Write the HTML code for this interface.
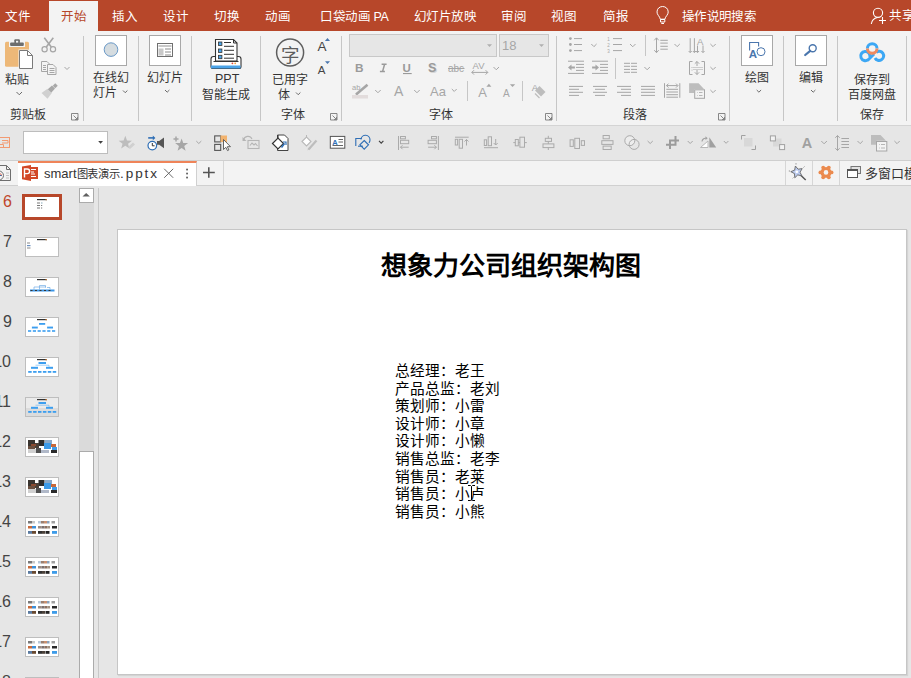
<!DOCTYPE html>
<html lang="zh-CN">
<head>
<meta charset="utf-8">
<style>
*{margin:0;padding:0;box-sizing:border-box}
html,body{width:911px;height:678px;overflow:hidden;background:#E6E6E6;font-family:"Liberation Sans",sans-serif;position:relative}
.a{position:absolute}
.t{position:absolute;white-space:nowrap;font-size:12px;line-height:12px;color:#333}
.tab{color:#fff;font-size:12.5px;line-height:13px}
.sep{position:absolute;width:1px;background:#C6C6C6}
.box{position:absolute;border:1px solid #A8A8A8;background:#fff}
svg{position:absolute;overflow:visible}
.th{background:#fff;border:1px solid #BEBEBE}
</style>
</head>
<body>
<!-- tab bar -->
<div class="a" style="left:0;top:0;width:911px;height:31px;background:#B7472A"></div>
<div class="a" style="left:49px;top:1px;width:49px;height:30px;background:#F3F3F3"></div>
<div class="t tab" style="left:5px;top:11px">文件</div>
<div class="t tab" style="left:61px;top:11px;color:#B7472A">开始</div>
<div class="t tab" style="left:112px;top:11px">插入</div>
<div class="t tab" style="left:163px;top:11px">设计</div>
<div class="t tab" style="left:214px;top:11px">切换</div>
<div class="t tab" style="left:265px;top:11px">动画</div>
<div class="t tab" style="left:320px;top:11px;letter-spacing:-0.4px">口袋动画 PA</div>
<div class="t tab" style="left:414px;top:11px;letter-spacing:-0.6px">幻灯片放映</div>
<div class="t tab" style="left:501px;top:11px">审阅</div>
<div class="t tab" style="left:551px;top:11px">视图</div>
<div class="t tab" style="left:603px;top:11px">简报</div>
<div class="t tab" style="left:682px;top:11px;letter-spacing:-0.7px">操作说明搜索</div>
<div class="t tab" style="left:889px;top:10px">共享</div>

<!-- ribbon -->
<div class="a" style="left:0;top:31px;width:911px;height:94px;background:#F3F3F3"></div>
<div class="a" style="left:0;top:125px;width:911px;height:1px;background:#D4D4D4"></div>

<!-- separators -->
<div class="sep" style="left:83px;top:36px;height:85px"></div>
<div class="sep" style="left:138px;top:36px;height:85px"></div>
<div class="sep" style="left:191px;top:36px;height:85px"></div>
<div class="sep" style="left:260px;top:36px;height:85px"></div>
<div class="sep" style="left:341px;top:36px;height:85px"></div>
<div class="sep" style="left:556px;top:36px;height:85px"></div>
<div class="sep" style="left:729px;top:36px;height:85px"></div>
<div class="sep" style="left:783px;top:36px;height:85px"></div>
<div class="sep" style="left:837px;top:36px;height:85px"></div>
<div class="sep" style="left:906px;top:36px;height:85px"></div>

<!-- ribbon labels -->
<div class="t" style="left:5px;top:74px">粘贴</div>
<div class="t" style="left:10px;top:109px">剪贴板</div>
<div class="t" style="left:93px;top:72px">在线幻</div>
<div class="t" style="left:93px;top:87px">灯片</div>
<div class="t" style="left:147px;top:72px">幻灯片</div>
<div class="t" style="left:215px;top:73px;font-size:12.5px">PPT</div>
<div class="t" style="left:202px;top:89px">智能生成</div>
<div class="t" style="left:272px;top:74px">已用字</div>
<div class="t" style="left:278px;top:89px">体</div>
<div class="t" style="left:281px;top:109px">字体</div>
<div class="t" style="left:429px;top:109px">字体</div>
<div class="t" style="left:623px;top:109px">段落</div>
<div class="t" style="left:745px;top:72px">绘图</div>
<div class="t" style="left:799px;top:72px">编辑</div>
<div class="t" style="left:854px;top:74px">保存到</div>
<div class="t" style="left:848px;top:89px">百度网盘</div>
<div class="t" style="left:860px;top:109px">保存</div>

<!-- big button boxes -->
<div class="box" style="left:95px;top:35px;width:32px;height:31px"></div>
<div class="box" style="left:149px;top:35px;width:32px;height:31px"></div>
<div class="box" style="left:741px;top:35px;width:32px;height:31px"></div>
<div class="box" style="left:795px;top:35px;width:32px;height:31px"></div>

<!-- font boxes -->
<div class="a" style="left:349px;top:34px;width:148px;height:23px;background:#E6E6E6;border:1px solid #C8C8C8"></div>
<div class="a" style="left:499px;top:34px;width:50px;height:23px;background:#E6E6E6;border:1px solid #C8C8C8"></div>
<div class="t" style="left:502px;top:39px;color:#A6A6A6;font-size:13px;line-height:13px">18</div>

<!-- QAT toolbar -->
<div class="a" style="left:0;top:126px;width:911px;height:34px;background:#E6E6E6"></div>
<div class="a" style="left:0;top:160px;width:911px;height:1px;background:#CFCFCF"></div>
<div class="a" style="left:23px;top:131px;width:85px;height:23px;background:#fff;border:1px solid #BDBDBD"></div>

<!-- doc tabs row -->
<div class="a" style="left:0;top:161px;width:911px;height:25px;background:#F3F3F3"></div>
<div class="a" style="left:0;top:185px;width:911px;height:1px;background:#D0D0D0"></div>
<div class="a" style="left:18px;top:161px;width:179px;height:25px;background:#fff;border-top:2px solid #EF8459;border-right:1px solid #D0D0D0"></div>
<div class="t" style="left:44px;top:167px;font-size:13px;line-height:14px;color:#333">smart<span style="font-size:11.3px;letter-spacing:-0.1px">图表演示</span><span style="letter-spacing:1.9px;font-size:13.5px">.pptx</span></div>
<div class="sep" style="left:223px;top:161px;height:24px;background:#D6D6D6"></div>
<div class="sep" style="left:785px;top:161px;height:24px;background:#D6D6D6"></div>
<div class="sep" style="left:812px;top:161px;height:24px;background:#D6D6D6"></div>
<div class="sep" style="left:839px;top:161px;height:24px;background:#D6D6D6"></div>
<div class="t" style="left:865px;top:167px;font-size:13px;line-height:13px;color:#333">多窗口模</div>

<!-- left panel -->
<div class="a" style="left:79px;top:188px;width:15px;height:490px;background:#DADADA"></div>
<div class="a" style="left:79px;top:188px;width:15px;height:15px;background:#fff;border:1px solid #ABABAB"></div>
<div class="a" style="left:79px;top:451px;width:15px;height:240px;background:#fff;border:1px solid #ABABAB"></div>
<div class="a" style="left:98px;top:188px;width:1px;height:490px;background:#C8C8C8"></div>

<!-- slide numbers & thumbs -->
<div class="t" style="right:899px;top:194px;font-size:16px;line-height:16px;color:#C0462A;text-align:right;width:40px;left:auto">6</div>
<div class="t" style="right:899px;top:234px;font-size:16px;line-height:16px;color:#444;text-align:right;width:40px;left:auto">7</div>
<div class="t" style="right:899px;top:274px;font-size:16px;line-height:16px;color:#444;text-align:right;width:40px;left:auto">8</div>
<div class="t" style="right:899px;top:314px;font-size:16px;line-height:16px;color:#444;text-align:right;width:40px;left:auto">9</div>
<div class="t" style="right:900px;top:354px;font-size:16px;line-height:16px;color:#444;text-align:right;width:40px;left:auto">10</div>
<div class="t" style="right:900px;top:394px;font-size:16px;line-height:16px;color:#444;text-align:right;width:40px;left:auto">11</div>
<div class="t" style="right:900px;top:434px;font-size:16px;line-height:16px;color:#444;text-align:right;width:40px;left:auto">12</div>
<div class="t" style="right:900px;top:474px;font-size:16px;line-height:16px;color:#444;text-align:right;width:40px;left:auto">13</div>
<div class="t" style="right:900px;top:514px;font-size:16px;line-height:16px;color:#444;text-align:right;width:40px;left:auto">14</div>
<div class="t" style="right:900px;top:554px;font-size:16px;line-height:16px;color:#444;text-align:right;width:40px;left:auto">15</div>
<div class="t" style="right:900px;top:594px;font-size:16px;line-height:16px;color:#444;text-align:right;width:40px;left:auto">16</div>
<div class="t" style="right:900px;top:634px;font-size:16px;line-height:16px;color:#444;text-align:right;width:40px;left:auto">17</div>
<div class="t" style="right:900px;top:674px;font-size:16px;line-height:16px;color:#444;text-align:right;width:40px;left:auto">18</div>
<div class="a th" style="left:25px;top:237px;width:34px;height:20px"></div>
<div class="a th" style="left:25px;top:277px;width:34px;height:20px"></div>
<div class="a th" style="left:25px;top:317px;width:34px;height:20px"></div>
<div class="a th" style="left:25px;top:357px;width:34px;height:20px"></div>
<div class="a th" style="left:25px;top:397px;width:34px;height:20px"></div>
<div class="a th" style="left:25px;top:437px;width:34px;height:20px"></div>
<div class="a th" style="left:25px;top:477px;width:34px;height:20px"></div>
<div class="a th" style="left:25px;top:517px;width:34px;height:20px"></div>
<div class="a th" style="left:25px;top:557px;width:34px;height:20px"></div>
<div class="a th" style="left:25px;top:597px;width:34px;height:20px"></div>
<div class="a th" style="left:25px;top:637px;width:34px;height:20px"></div>
<div class="a th" style="left:25px;top:677px;width:34px;height:20px"></div>
<div class="a" style="left:22px;top:194px;width:40px;height:26px;border:3px solid #B7472A;background:#fff"></div>
<svg width="911" height="678" style="left:0;top:0" viewBox="0 0 911 678">
<rect x="37" y="199" width="10" height="1.2" fill="#333"/><rect x="45.5" y="199" width="1.5" height="1.2" fill="#C07A3A"/>
<g fill="#777"><rect x="37" y="202.5" width="3" height="1"/><rect x="37" y="205" width="3" height="1"/><rect x="37" y="207.5" width="3" height="1"/><rect x="41" y="205" width="1.2" height="1"/><rect x="41" y="207.5" width="1.2" height="1"/><rect x="41" y="202.5" width="1.5" height="1" fill="#8AB"/></g>
<rect x="37" y="239" width="10" height="1.2" fill="#333"/><rect x="45.5" y="239" width="1.5" height="1.2" fill="#C07A3A"/>
<g fill="#888"><rect x="27" y="242.5" width="3" height="1"/><rect x="27" y="245" width="3.5" height="1.2" fill="#6A8FC0"/><rect x="27" y="247.5" width="3.5" height="1"/></g>
<rect x="37" y="279" width="10" height="1.2" fill="#333"/><rect x="45.5" y="279" width="1.5" height="1.2" fill="#C07A3A"/>
<g fill="none" stroke="#5AA0E0" stroke-width="0.6"><path d="M39.5 285.5h6v2M39.5 285.5v4M34 287h12M34 287v2.5M47 287.5h3v2"/></g>
<rect x="30" y="289.5" width="24.5" height="2" fill="#3C95E6"/><g fill="#333"><rect x="30.5" y="290" width="2" height="1"/><rect x="35" y="290" width="2" height="1"/><rect x="39.5" y="290" width="2" height="1"/><rect x="44" y="290" width="2" height="1"/><rect x="48.5" y="290" width="2" height="1"/></g>
<rect x="37" y="319" width="10" height="1.2" fill="#333"/><rect x="45.5" y="319" width="1.5" height="1.2" fill="#C07A3A"/>
<rect x="39" y="323" width="6.2" height="1.8" fill="#3C9EEF"/>
<rect x="31.9" y="326.6" width="5.9" height="1.9" fill="#3C9EEF"/><rect x="47.1" y="326.6" width="5.9" height="1.9" fill="#3C9EEF"/>
<rect x="28.0" y="330.2" width="3.2" height="1.6" fill="#3C9EEF"/>
<rect x="32.8" y="330.2" width="3.2" height="1.6" fill="#3C9EEF"/>
<rect x="37.6" y="330.2" width="3.2" height="1.6" fill="#3C9EEF"/>
<rect x="42.4" y="330.2" width="3.2" height="1.6" fill="#3C9EEF"/>
<rect x="47.2" y="330.2" width="3.2" height="1.6" fill="#3C9EEF"/>
<rect x="52.0" y="330.2" width="3.2" height="1.6" fill="#3C9EEF"/>
<rect x="37" y="359" width="10" height="1.2" fill="#333"/><rect x="45.5" y="359" width="1.5" height="1.2" fill="#C07A3A"/>
<rect x="38.5" y="362" width="7.5" height="2" fill="#3C9EEF"/>
<path d="M35.5 365.2h13.5v1.5" stroke="#3C9EEF" stroke-width="0.5" fill="none"/>
<rect x="31" y="366.8" width="7" height="2" fill="#3C9EEF"/><rect x="46" y="366.8" width="7" height="2" fill="#3C9EEF"/>
<rect x="28.2" y="371" width="3.5" height="1.8" fill="#3C9EEF"/>
<rect x="33.1" y="371" width="3.5" height="1.8" fill="#3C9EEF"/>
<rect x="38.0" y="371" width="3.5" height="1.8" fill="#3C9EEF"/>
<rect x="42.9" y="371" width="3.5" height="1.8" fill="#3C9EEF"/>
<rect x="47.8" y="371" width="3.5" height="1.8" fill="#3C9EEF"/>
<rect x="52.7" y="371" width="3.5" height="1.8" fill="#3C9EEF"/>
<rect x="26" y="398" width="32" height="18" fill="#EBEBEB"/><rect x="26" y="408" width="32" height="8" fill="#DCDCDC"/>
<rect x="37" y="399" width="10" height="1.2" fill="#333"/><rect x="45.5" y="399" width="1.5" height="1.2" fill="#C07A3A"/>
<rect x="38.5" y="402" width="7.5" height="2" fill="#3C9EEF"/>
<path d="M35.5 405.2h13.5v1.5" stroke="#3C9EEF" stroke-width="0.5" fill="none"/>
<rect x="31" y="406.8" width="7" height="2" fill="#3C9EEF"/><rect x="46" y="406.8" width="7" height="2" fill="#3C9EEF"/>
<rect x="28.2" y="411" width="3.5" height="1.8" fill="#3C9EEF"/>
<rect x="33.1" y="411" width="3.5" height="1.8" fill="#3C9EEF"/>
<rect x="38.0" y="411" width="3.5" height="1.8" fill="#3C9EEF"/>
<rect x="42.9" y="411" width="3.5" height="1.8" fill="#3C9EEF"/>
<rect x="47.8" y="411" width="3.5" height="1.8" fill="#3C9EEF"/>
<rect x="52.7" y="411" width="3.5" height="1.8" fill="#3C9EEF"/>
<rect x="28" y="440" width="7" height="6" fill="#3A3530"/>
<rect x="28" y="446" width="7" height="5" fill="#6A5040"/>
<rect x="38.5" y="440" width="6" height="6" fill="#2F2F2F"/>
<rect x="35" y="443" width="4" height="5" fill="#4A4038"/>
<rect x="45" y="440" width="7" height="4" fill="#8AA9C8"/>
<rect x="44" y="443" width="7" height="6" fill="#3D9BE8"/>
<rect x="51" y="444" width="5" height="3" fill="#C8693A"/>
<rect x="28" y="449" width="8" height="4" fill="#D0D0D0"/>
<rect x="36" y="448" width="5" height="5" fill="#505050"/>
<rect x="41" y="450" width="8" height="3" fill="#B0B8C8"/>
<rect x="52" y="447" width="5" height="4" fill="#3F9AE6"/>
<rect x="51" y="450" width="6" height="3" fill="#2A2A2A"/>
<rect x="31" y="444" width="5" height="2" fill="#8A4A30"/>
<rect x="28" y="480" width="7" height="6" fill="#3A3530"/>
<rect x="28" y="486" width="7" height="5" fill="#6A5040"/>
<rect x="38.5" y="480" width="6" height="6" fill="#2F2F2F"/>
<rect x="35" y="483" width="4" height="5" fill="#4A4038"/>
<rect x="45" y="480" width="7" height="4" fill="#8AA9C8"/>
<rect x="44" y="483" width="7" height="6" fill="#3D9BE8"/>
<rect x="51" y="484" width="5" height="3" fill="#C8693A"/>
<rect x="28" y="489" width="8" height="4" fill="#D0D0D0"/>
<rect x="36" y="488" width="5" height="5" fill="#505050"/>
<rect x="41" y="490" width="8" height="3" fill="#B0B8C8"/>
<rect x="52" y="487" width="5" height="4" fill="#3F9AE6"/>
<rect x="51" y="490" width="6" height="3" fill="#2A2A2A"/>
<rect x="31" y="484" width="5" height="2" fill="#8A4A30"/>
<rect x="28" y="521" width="4" height="2.5" fill="#7A7A7A"/>
<rect x="32" y="521" width="3" height="2.5" fill="#C8C8C8"/>
<rect x="38" y="521" width="3" height="2.5" fill="#B8C8D8"/>
<rect x="41" y="521" width="3" height="2.5" fill="#9A8070"/>
<rect x="44" y="521" width="3" height="2.5" fill="#C89070"/>
<rect x="47" y="521" width="2.5" height="2.5" fill="#8AA0B8"/>
<rect x="51.5" y="521" width="3.5" height="2.5" fill="#A0A0A0"/>
<rect x="28" y="526" width="4" height="2.5" fill="#C8693A"/>
<rect x="32" y="526" width="4" height="2.5" fill="#3D8FD8"/>
<rect x="38" y="526" width="3.5" height="2.5" fill="#9A8A80"/>
<rect x="41.5" y="526" width="3" height="2.5" fill="#7A7070"/>
<rect x="44.5" y="526" width="3" height="2.5" fill="#8A7060"/>
<rect x="47.5" y="526" width="2.5" height="2.5" fill="#A09080"/>
<rect x="52" y="526" width="5" height="2.5" fill="#2A2A2A"/>
<rect x="28" y="531" width="4" height="2.8" fill="#5A7AA0"/>
<rect x="32" y="531" width="4" height="2.8" fill="#6A4A30"/>
<rect x="38" y="531" width="4" height="2.8" fill="#303030"/>
<rect x="42" y="531" width="3" height="2.8" fill="#4A4038"/>
<rect x="45.5" y="531" width="4" height="2.8" fill="#222"/>
<rect x="52" y="531" width="5" height="2.8" fill="#3D9BE8"/>
<rect x="28" y="561" width="4" height="2.5" fill="#7A7A7A"/>
<rect x="32" y="561" width="3" height="2.5" fill="#C8C8C8"/>
<rect x="38" y="561" width="3" height="2.5" fill="#B8C8D8"/>
<rect x="41" y="561" width="3" height="2.5" fill="#9A8070"/>
<rect x="44" y="561" width="3" height="2.5" fill="#C89070"/>
<rect x="47" y="561" width="2.5" height="2.5" fill="#8AA0B8"/>
<rect x="51.5" y="561" width="3.5" height="2.5" fill="#A0A0A0"/>
<rect x="28" y="566" width="4" height="2.5" fill="#C8693A"/>
<rect x="32" y="566" width="4" height="2.5" fill="#3D8FD8"/>
<rect x="38" y="566" width="3.5" height="2.5" fill="#9A8A80"/>
<rect x="41.5" y="566" width="3" height="2.5" fill="#7A7070"/>
<rect x="44.5" y="566" width="3" height="2.5" fill="#8A7060"/>
<rect x="47.5" y="566" width="2.5" height="2.5" fill="#A09080"/>
<rect x="52" y="566" width="5" height="2.5" fill="#2A2A2A"/>
<rect x="28" y="571" width="4" height="2.8" fill="#5A7AA0"/>
<rect x="32" y="571" width="4" height="2.8" fill="#6A4A30"/>
<rect x="38" y="571" width="4" height="2.8" fill="#303030"/>
<rect x="42" y="571" width="3" height="2.8" fill="#4A4038"/>
<rect x="45.5" y="571" width="4" height="2.8" fill="#222"/>
<rect x="52" y="571" width="5" height="2.8" fill="#3D9BE8"/>
<rect x="28" y="601" width="4" height="2.5" fill="#7A7A7A"/>
<rect x="32" y="601" width="3" height="2.5" fill="#C8C8C8"/>
<rect x="38" y="601" width="3" height="2.5" fill="#B8C8D8"/>
<rect x="41" y="601" width="3" height="2.5" fill="#9A8070"/>
<rect x="44" y="601" width="3" height="2.5" fill="#C89070"/>
<rect x="47" y="601" width="2.5" height="2.5" fill="#8AA0B8"/>
<rect x="51.5" y="601" width="3.5" height="2.5" fill="#A0A0A0"/>
<rect x="28" y="606" width="4" height="2.5" fill="#C8693A"/>
<rect x="32" y="606" width="4" height="2.5" fill="#3D8FD8"/>
<rect x="38" y="606" width="3.5" height="2.5" fill="#9A8A80"/>
<rect x="41.5" y="606" width="3" height="2.5" fill="#7A7070"/>
<rect x="44.5" y="606" width="3" height="2.5" fill="#8A7060"/>
<rect x="47.5" y="606" width="2.5" height="2.5" fill="#A09080"/>
<rect x="52" y="606" width="5" height="2.5" fill="#2A2A2A"/>
<rect x="28" y="611" width="4" height="2.8" fill="#5A7AA0"/>
<rect x="32" y="611" width="4" height="2.8" fill="#6A4A30"/>
<rect x="38" y="611" width="4" height="2.8" fill="#303030"/>
<rect x="42" y="611" width="3" height="2.8" fill="#4A4038"/>
<rect x="45.5" y="611" width="4" height="2.8" fill="#222"/>
<rect x="52" y="611" width="5" height="2.8" fill="#3D9BE8"/>
<rect x="28" y="641" width="4" height="2.5" fill="#7A7A7A"/>
<rect x="32" y="641" width="3" height="2.5" fill="#C8C8C8"/>
<rect x="38" y="641" width="3" height="2.5" fill="#B8C8D8"/>
<rect x="41" y="641" width="3" height="2.5" fill="#9A8070"/>
<rect x="44" y="641" width="3" height="2.5" fill="#C89070"/>
<rect x="47" y="641" width="2.5" height="2.5" fill="#8AA0B8"/>
<rect x="51.5" y="641" width="3.5" height="2.5" fill="#A0A0A0"/>
<rect x="28" y="646" width="4" height="2.5" fill="#C8693A"/>
<rect x="32" y="646" width="4" height="2.5" fill="#3D8FD8"/>
<rect x="38" y="646" width="3.5" height="2.5" fill="#9A8A80"/>
<rect x="41.5" y="646" width="3" height="2.5" fill="#7A7070"/>
<rect x="44.5" y="646" width="3" height="2.5" fill="#8A7060"/>
<rect x="47.5" y="646" width="2.5" height="2.5" fill="#A09080"/>
<rect x="52" y="646" width="5" height="2.5" fill="#2A2A2A"/>
<rect x="28" y="651" width="4" height="2.8" fill="#5A7AA0"/>
<rect x="32" y="651" width="4" height="2.8" fill="#6A4A30"/>
<rect x="38" y="651" width="4" height="2.8" fill="#303030"/>
<rect x="42" y="651" width="3" height="2.8" fill="#4A4038"/>
<rect x="45.5" y="651" width="4" height="2.8" fill="#222"/>
<rect x="52" y="651" width="5" height="2.8" fill="#3D9BE8"/>
</svg>
<!-- slide -->
<div class="a" style="left:117px;top:229px;width:790px;height:446px;background:#fff;border:1px solid #C6C6C6;box-shadow:1px 1px 1px rgba(0,0,0,0.08)"></div>
<div class="t" style="left:381px;top:253px;font-size:26px;line-height:26px;font-weight:bold;color:#000">想象力公司组织架构图</div>
<div class="t" style="left:395px;top:363px;font-size:14.67px;line-height:17.6px;color:#000;white-space:pre">总经理：老王
产品总监：老刘
策划师：小雷
设计师：小章
设计师：小懒
销售总监：老李
销售员：老莱
销售员：小卢
销售员：小熊</div>


<svg width="911" height="678" style="left:0;top:0" viewBox="0 0 911 678">
<!-- tab bar icons -->
<g fill="none" stroke="#fff" stroke-width="1">
  <path d="M660.3 19.2c-0.3-1.5-1-2.5-2-3.8-0.8-1-1.3-2.2-1.3-3.5 0-3.2 2.5-5.4 5.6-5.4s5.6 2.2 5.6 5.4c0 1.3-0.5 2.5-1.3 3.5-1 1.3-1.7 2.3-2 3.8z"/>
  <path d="M660.5 19.5h4.3v2.5h-4.3zM661.3 23.5h2.7"/>
</g>
<g fill="none" stroke="#fff" stroke-width="1.1">
  <circle cx="878" cy="12.8" r="4.6"/>
  <path d="M871.3 24c0.5-3.5 3-6 6.3-6.5M882.5 17v7M879 20.5h7"/>
</g>

<!-- clipboard paste -->
<rect x="5" y="41.8" width="24" height="25" rx="1.5" fill="#EDB878"/>
<rect x="9" y="41" width="16" height="6" fill="#F3F3F3"/>
<rect x="10.1" y="42.4" width="13.7" height="3.5" rx="1" fill="#6E6E6E"/>
<rect x="14.3" y="39.2" width="5.6" height="4" rx="1" fill="#6E6E6E"/>
<rect x="16" y="40.8" width="2.2" height="1.8" fill="#F3F3F3"/>
<path d="M18.5 49.5h10l4.5 4.5v15.5h-14.5z" fill="#F3F3F3"/>
<path d="M19.5 50.5h8l5 5v13h-13z" fill="#fff" stroke="#7A7A7A" stroke-width="1" stroke-linejoin="miter"/>
<path d="M27.5 50.5v5h5" fill="none" stroke="#7A7A7A" stroke-width="1"/>
<!-- scissors -->
<g fill="none" stroke="#A6A6A6">
  <circle cx="44.6" cy="49.2" r="2.6" stroke-width="1.2"/><circle cx="53" cy="49.2" r="2.6" stroke-width="1.2"/>
  <path d="M46.3 47l7-9.2M51.3 47l-7-9.2" stroke-width="1.6"/>
</g>
<!-- copy -->
<path d="M41.5 61.5h5.5l2.5 2.5v7.5h-8z" fill="#F3F3F3" stroke="#A6A6A6" stroke-width="1"/>
<path d="M47.5 64.5h5.5l3 3v7h-8.5z" fill="#F3F3F3" stroke="#A6A6A6" stroke-width="1"/>
<path d="M43 65.5h3M43 67.5h3M43 69.5h3M49.5 68.5h5M49.5 70.5h5M49.5 72.5h5" stroke="#A6A6A6" stroke-width="1"/>
<!-- format painter -->
<rect x="53.5" y="84" width="3.5" height="3.5" transform="rotate(45 55.25 85.75)" fill="#A8A8A8"/>
<path d="M47.5 89.5l4.5-4 3 3-4 4.5z" fill="#A8A8A8"/>
<path d="M41.5 93l6-4.2 4.3 4.3-4.3 5.6z" fill="#D0D0D0"/>

<!-- chevrons (ribbon) -->
<g fill="none" stroke="#6A6A6A" stroke-width="1">
  <path d="M16.5 92l2.75 2.75 2.75-2.75"/>
  <path d="M123 90.5l2.2 2.2 2.2-2.2"/>
  <path d="M165 90l2.2 2.2 2.2-2.2"/>
  <path d="M296 92.5l2.2 2.2 2.2-2.2"/>
  <path d="M756.7 90l2.2 2.2 2.2-2.2"/>
  <path d="M811 90l2.2 2.2 2.2-2.2"/>
</g>
<g fill="none" stroke="#A6A6A6" stroke-width="1">
  <path d="M64.5 67l2.5 2.5 2.5-2.5"/>
</g>

<!-- online slide circle -->
<circle cx="111" cy="49.6" r="6.8" fill="#D5DCE0" stroke="#5B8EC2" stroke-width="0.9"/>
<!-- slide layout icon -->
<rect x="157.5" y="43.5" width="15" height="13" fill="#fff" stroke="#6F6F6F" stroke-width="1"/>
<rect x="158.5" y="45" width="13" height="2" fill="#C8C8C8"/>
<rect x="158.5" y="48.5" width="5" height="7" fill="#C8C8C8"/>
<path d="M165 49h6M165 52h6M165 55h6" stroke="#8A8A8A" stroke-width="1"/>

<!-- PPT smart icon -->
<path d="M213.5 56.5h25a2.5 2.5 0 0 1 2.5 2.5v7.5a2 2 0 0 1 -2 2h-26a2 2 0 0 1 -2 -2v-7.5a2.5 2.5 0 0 1 2.5 -2.5z" fill="#fff" stroke="#333" stroke-width="1.1"/>
<rect x="211" y="65.5" width="29.5" height="3" fill="#4AA3E8"/>
<path d="M215.5 39.5h18l3.5 3.5v18h-21.5z" fill="#fff" stroke="#333" stroke-width="1.1"/>
<path d="M233.5 39.5v3.5h3.5" fill="none" stroke="#333" stroke-width="1"/>
<g fill="#4AA3E8" stroke="#333" stroke-width="0.8">
  <rect x="218.5" y="42" width="3.4" height="3.4"/>
  <rect x="218.5" y="49" width="3.4" height="3.4"/>
  <rect x="218.5" y="55.3" width="3.4" height="3.4"/>
</g>
<path d="M224 42.5h7M224 46.3h10M224 50.3h10M224 54.3h10M224 58.2h10" stroke="#333" stroke-width="1"/>
<path d="M213.5 61.5h25" stroke="#333" stroke-width="1"/>
<circle cx="232.4" cy="63.3" r="0.9" fill="#E34B3B"/><circle cx="235.2" cy="63.3" r="0.9" fill="#F2A03D"/>
<!-- 字 circle -->
<circle cx="290.1" cy="52.5" r="13.5" fill="none" stroke="#5E5E5E" stroke-width="1.5"/>
<text x="290.2" y="61.6" font-size="18.5" text-anchor="middle" fill="#5E5E5E" font-family="Liberation Sans">字</text>
<!-- grow/shrink font (enabled) -->
<text x="321.9" y="51.2" font-size="13.5" text-anchor="middle" fill="#444" font-family="Liberation Sans">A</text>
<path d="M324.9 41h5.1l-2.55-3z" fill="#4A76AD"/>
<text x="321.7" y="74.2" font-size="11.5" text-anchor="middle" fill="#444" font-family="Liberation Sans">A</text>
<path d="M325 61.3h5l-2.5 2.6z" fill="#4A76AD"/>
<!-- launchers -->
<g fill="none" stroke="#7A7A7A" stroke-width="0.9">
  <path d="M71.5 113.5h6.5v6.5h-6.5z M73.5 115.5l4 4M77.5 117v2.5h-2.5" />
  <path d="M330.5 113.5h6.5v6.5h-6.5z M332.5 115.5l4 4M336.5 117v2.5h-2.5" />
  <path d="M545.5 113.5h6.5v6.5h-6.5z M547.5 115.5l4 4M551.5 117v2.5h-2.5" />
  <path d="M718.5 113.5h6.5v6.5h-6.5z M720.5 115.5l4 4M724.5 117v2.5h-2.5" />
</g>
</svg>

<svg width="911" height="678" style="left:0;top:0" viewBox="0 0 911 678">
<!-- font group (disabled gray) -->
<g fill="#A6A6A6" font-family="Liberation Sans">
  <text x="355" y="72" font-size="11.8" font-weight="bold" fill="#9A9A9A">B</text>
  </g><path d="M381.6 64.2h5M379.9 71.4h5M384.6 64.2l-2 7.2" stroke="#9A9A9A" stroke-width="1.5" fill="none"/><g fill="#A6A6A6" font-family="Liberation Sans">
  <text x="402.6" y="72" font-size="11.5" font-weight="bold" fill="#9A9A9A">U</text>
  <rect x="403" y="73" width="8.7" height="1.1" fill="#9A9A9A"/>
  <text x="429" y="73" font-size="12.5" font-weight="bold" fill="#D6D6D6">S</text>
  <text x="428" y="72" font-size="12.5" font-weight="bold" fill="#9A9A9A">S</text>
  <text x="448" y="72" font-size="10">abc</text>
  <rect x="448" y="68" width="16.5" height="1"/>
  <text x="472.5" y="68.6" font-size="9.5">AV</text>
  <text x="352" y="89.5" font-size="7.5">ab</text>
  <text x="394" y="95.5" font-size="14">A</text>
  <text x="430" y="95.5" font-size="13">Aa</text>
  <text x="478.2" y="96.7" font-size="13">A</text>
  <text x="503" y="96.7" font-size="10">A</text>
  <text x="531.8" y="91" font-size="9.5">A</text>
</g>
<path d="M471.8 72.4h16M474 70.2l-2.2 2.2 2.2 2.2M485.6 70.2l2.2 2.2-2.2 2.2" fill="none" stroke="#A6A6A6" stroke-width="1"/>
<path d="M356 94.4l11.5-9.6" stroke="#A6A6A6" stroke-width="2.6"/>
<path d="M355.5 95l1.5-2.5 1.5 1.3z" fill="#A6A6A6"/>
<rect x="352" y="95" width="16" height="3.5" fill="#E2DCDC"/>
<path d="M486.4 86.7h5l-2.5-2.9z" fill="#A6A6A6"/>
<path d="M509.9 84.3h5.3l-2.65 2.6z" fill="#A6A6A6"/>
<path d="M539.5 86l6 6-4.5 4.5-6-6z" fill="#BDBDBD"/>
<path d="M535 93.5l4.5 4.5" stroke="#BDBDBD" stroke-width="1.2"/>
<g fill="none" stroke="#A6A6A6" stroke-width="1">
  <path d="M375.2 90l2.75 2.75 2.75-2.75"/>
  <path d="M414.2 90l2.75 2.75 2.75-2.75"/>
  <path d="M451.8 89l2.45 2.45 2.45-2.45"/>
  <path d="M493.5 67l2.75 2.75 2.75-2.75"/>
  
  
</g>
<rect x="467" y="81" width="1" height="20" fill="#C6C6C6"/>
<rect x="522" y="81" width="1" height="20" fill="#C6C6C6"/>

<path d="M487 44.2h5l-2.5 2.7z M539 44.2h5l-2.5 2.7z" fill="#B0B0B0"/>
<!-- paragraph group -->
<g fill="#A6A6A6">
  <circle cx="570.4" cy="38.6" r="1.4"/><circle cx="570.4" cy="44.5" r="1.4"/><circle cx="570.4" cy="50.6" r="1.4"/>
</g>
<g fill="none" stroke="#A6A6A6" stroke-width="1">
  <path d="M574 38.6h8M574 44.5h8M574 50.6h8"/>
  <path d="M613 38.6h9M613 44.5h9M613 50.6h9"/>
  <path d="M591.3 44l2.65 2.65 2.65-2.65M630 44l2.75 2.75 2.75-2.75"/>
  <path d="M568 61.2h16M576 64.4h8M576 67.4h8M576 70.4h8M568 73.4h16"/>
  <path d="M592 61.2h16M600 64.4h8M600 67.4h8M600 70.4h8M592 73.4h16"/>
  <path d="M624 63.3h6M631 63.3h6M624 66.3h6M631 66.3h6M624 69.4h6M631 69.4h6M624 72.3h6M631 72.3h6"/>
  <path d="M644.4 67l2.75 2.75 2.75-2.75"/>
  <path d="M569 86.4h14M569 89.3h10M569 92.3h14M569 95.4h10"/>
  <path d="M593 86.4h14M595 89.3h10M593 92.3h14M595 95.4h10"/>
  <path d="M617 86.4h14M621 89.3h10M617 92.3h14M621 95.4h10"/>
  <path d="M641 86.4h14M641 89.3h14M641 92.3h14M641 95.4h14"/>
  <path d="M660.3 40.3h7.5M660.3 43.1h7.5M660.3 46.3h7.5M660.3 49.2h7.5"/>
  <path d="M656.5 38v14.5M654.3 40.3l2.2-2.5 2.2 2.5M654.3 50.2l2.2 2.5 2.2-2.5"/>
  <path d="M674.5 44l2.65 2.65 2.65-2.65M710.4 44l2.65 2.65 2.65-2.65M710.4 67l2.65 2.65 2.65-2.65M710.4 90l2.65 2.65 2.65-2.65"/>
  <path d="M690.2 38.2v14M694.4 38.2v14M697.5 45.5v6.7M703 45.5v6.7"/>
  <path d="M688.7 51l1.5 1.7 1.5-1.7M692.9 51l1.5 1.7 1.5-1.7M696 51l1.5 1.7 1.5-1.7M701.5 51l1.5 1.7 1.5-1.7"/>
  <path d="M692.5 61.5h-3v13h3M701.5 61.5h3v13h-3"/>
  <path d="M697 61.5v4.5M694.8 63.7l2.2-2.2 2.2 2.2M697 70v4.5M694.8 72.3l2.2 2.2 2.2-2.2"/>
  <path d="M693.5 67.5h9M693.5 69.5h9" stroke-dasharray="1 1" />
  <path d="M664.5 83.2v14.6M679.8 83.2v14.6M666.3 89.3h11.7M666.3 92h11.7M666.3 94.7h11.7M666.3 97.2h11.7"/>
  <path d="M666.5 85.6h11M668.5 83.6l-2 2 2 2M676 83.6l2 2-2 2"/>
</g>
<g fill="#A6A6A6">
  <text x="697" y="44.7" font-size="9.5" font-family="Liberation Sans">A</text>
  <circle cx="692" cy="67.5" r="0.5"/><circle cx="692" cy="70" r="0.5"/>
  <text x="607.3" y="41" font-size="4.5" font-family="Liberation Sans">1</text>
  <text x="607.3" y="47" font-size="4.5" font-family="Liberation Sans">2</text>
  <text x="607.3" y="53" font-size="4.5" font-family="Liberation Sans">3</text>
  <path d="M568 67.4l3.5-3v2h3.4v2h-3.4v2z"/>
  <path d="M599 67.4l-3.5-3v2h-3.4v2h3.4v2z"/>
  <path d="M689.1 83.2h9.5l5.4 5.8h-9.8v4h-5.1z" fill="#BDBDBD"/>
</g>
<rect x="694.7" y="89.8" width="9.8" height="8.5" fill="#F3F3F3" stroke="#A6A6A6" stroke-width="1"/>
<path d="M697 92.5h0.6M697 95.5h0.6M699 92.5h3.5M699 95.5h3.5" stroke="#A6A6A6" stroke-width="0.8"/>
<rect x="645" y="35" width="1" height="21" fill="#C6C6C6"/>
<rect x="615" y="58" width="1" height="21" fill="#C6C6C6"/>

<!-- drawing -->
<path d="M749.6 50.5v-8h9v4" fill="none" stroke="#4A76AD" stroke-width="1.1"/>
<circle cx="761" cy="51.7" r="4" fill="none" stroke="#4A76AD" stroke-width="1"/>
<text x="748.8" y="57.8" font-size="11.5" font-weight="bold" fill="#4A76AD" font-family="Liberation Sans">A</text>
<!-- find -->
<circle cx="812.7" cy="48.2" r="3.5" fill="none" stroke="#4A76AD" stroke-width="1.4"/>
<path d="M810.2 50.8l-5 4.2" stroke="#4A76AD" stroke-width="2.2" stroke-linecap="round"/>

<!-- baidu -->
<g fill="none" stroke-width="3" stroke="#3CA7F4">
  <path d="M868.2 59.6a4.6 4.6 0 1 1 1.6 -2.6"/>
  <path d="M867.5 60.5l6.5 -6.5"/>
  <path d="M876.2 52.2a4.6 4.6 0 1 1 -1.2 5.8"/>
  <path d="M867.4 48.5a4.8 4.8 0 0 1 9.6 0"/>
</g>
<path d="M877 48.5a4.8 4.8 0 0 1 -9.6 0" fill="none" stroke="#EF8A5F" stroke-width="3"/>
</svg>

<svg width="911" height="678" style="left:0;top:0" viewBox="0 0 911 678">
<!-- QAT -->
<g fill="none" stroke="#F29A72" stroke-width="1">
  <rect x="-1.5" y="137.5" width="11" height="10"/>
  <path d="M2 140.5h6v2.5h-6M-1 144.5h4.5v3"/>
</g>
<path d="M98.2 141h4.8l-2.4 2.8z" fill="#404040"/>
<!-- star painter disabled -->
<polygon points="125.30,135.80 127.00,140.45 131.96,140.64 128.06,143.70 129.41,148.46 125.30,145.70 121.19,148.46 122.54,143.70 118.64,140.64 123.60,140.45" fill="#BDBDBD"/>
<path d="M128 147l5-4.5 2 2-5 4.5z" fill="#D0D0D0"/>
<!-- timer speaker -->
<circle cx="152.3" cy="145.6" r="4.3" fill="#fff" stroke="#2E6EB5" stroke-width="1.2"/>
<path d="M152.3 143v2.8h2.3" fill="none" stroke="#333" stroke-width="1"/>
<path d="M148.2 137.9h5.5" stroke="#2E6EB5" stroke-width="1.6"/>
<path d="M152.8 135.6l2.6 2.3-2.6 2.3z" fill="#2E6EB5"/>
<path d="M157 141h2.2l4.8-3.5v10.8l-4.8-3.5h-2.2z" fill="#555"/>
<!-- star plus -->
<polygon points="181.60,138.40 183.25,142.93 188.07,143.10 184.26,146.07 185.60,150.70 181.60,148.00 177.60,150.70 178.94,146.07 175.13,143.10 179.95,142.93" fill="#A6A6A6"/>
<path d="M176 136.6v5M173.5 139.1h5" stroke="#A6A6A6" stroke-width="1.5"/>
<g fill="none" stroke="#A6A6A6" stroke-width="1">
  <path d="M196.3 141.1l2.5 2.4 2.5-2.4"/>
  <path d="M647.6 141l2.6 2.5 2.6-2.5"/>
  <path d="M687.7 141l2.5 2.5 2.5-2.5"/>
  <path d="M723.8 141l2.3 2.3 2.3-2.3"/>
  <path d="M821.3 141l2.8 2.8 2.8-2.8"/>
  <path d="M857.5 141l2.65 2.65 2.65-2.65"/>
  <path d="M894.4 141l2.65 2.65 2.65-2.65"/>
</g>
<!-- selection pane -->
<g fill="none" stroke="#555" stroke-width="1.1">
  <rect x="214.7" y="135.9" width="6" height="6"/>
  <rect x="214.7" y="144.4" width="6" height="6"/>
</g>
<rect x="220.5" y="135.5" width="6.5" height="6.5" fill="#F2B36F"/>
<path d="M223.5 139.5v10l2.3-2.2 1.7 3.3 1.4-0.7-1.6-3.2h3.2z" fill="#fff" stroke="#555" stroke-width="0.9"/>
<!-- reset picture disabled -->
<g fill="none" stroke="#B5B5B5" stroke-width="1.1">
  <rect x="248" y="140.5" width="11" height="8"/>
  <path d="M243.5 140a4.5 4.5 0 0 1 8.5 -1"/>
  <path d="M250 145.5l2-2.5 2 2 1.5-1.5 2 2.5"/>
</g>
<path d="M242.5 137v4h4z" fill="#B5B5B5"/>
<!-- format page bucket -->
<path d="M277.5 135h7l3.5 3.5v12h-10.5z" fill="#fff" stroke="#444" stroke-width="1"/>
<path d="M272.5 143.5l5.5-5.5 5.5 5.5-5.5 5.5z" fill="#fff" stroke="#333" stroke-width="1.2"/>
<path d="M278 138v-3" stroke="#333" stroke-width="1.1"/>
<path d="M281.5 147.5l3-4" stroke="#2E6EB5" stroke-width="1.6"/>
<path d="M283 142h3v3" fill="none" stroke="#2E6EB5" stroke-width="1.2"/>
<!-- disabled brush -->
<path d="M302 141.5l4.5-4.5 4.5 4.5-4.5 4.5z" fill="#fff" stroke="#B8B8B8" stroke-width="1.1"/>
<path d="M306.5 137v-2" stroke="#B8B8B8" stroke-width="1"/>
<path d="M308.5 149.5l8-9" stroke="#BDBDBD" stroke-width="2.2"/>
<path d="M307 150.5l2.5-3.5 1.5 1.3z" fill="#BDBDBD"/>
<!-- text box -->
<rect x="330.3" y="136.4" width="14.5" height="11.8" fill="#fff" stroke="#555" stroke-width="1"/>
<text x="332.3" y="144.5" font-size="7.5" fill="#2E6EB5" font-family="Liberation Sans" font-weight="bold">A</text>
<path d="M338.5 139.5h4.5M338.5 142h4.5M332.5 145.5h10.5" stroke="#555" stroke-width="0.9"/>
<!-- shapes -->
<g fill="none" stroke="#2E6EB5" stroke-width="1.1">
  <path d="M355.8 146v-7.5h6"/>
  <path d="M358 146.2h5"/>
  <path d="M361 139.5a4.5 4.5 0 0 1 9 0.5 4.5 4.5 0 0 1 -1 2.8"/>
  <path d="M364.2 140.5l4.3 4.3-4.3 4.3-4.3-4.3z"/>
</g>
<path d="M379 140.8l2.2 2.4 2.2-2.4" fill="none" stroke="#404040" stroke-width="1.1"/>
<!-- align icons -->
<g fill="none" stroke="#AAAAAA" stroke-width="1">
  <path d="M398.5 136v14"/>
  <rect x="400.5" y="136.5" width="4.9" height="2.3"/>
  <rect x="400.5" y="140.3" width="8.2" height="3.4"/>
  <path d="M400.5 147.2h8.2M402.5 145.2l-2 2 2 2"/>
  <path d="M438.4 136v14"/>
  <rect x="431.5" y="136.5" width="4.9" height="2.3"/>
  <rect x="428.1" y="140.3" width="8.3" height="3.4"/>
  <path d="M428.1 147.2h8.3M434.4 145.2l2 2-2 2"/>
  <path d="M455 137.2h13.7"/>
  <rect x="455.3" y="139.3" width="2.3" height="5.7"/>
  <rect x="459.2" y="139.3" width="3.3" height="8.9"/>
  <path d="M466.5 139.5v6M464.5 141.5l2-2 2 2"/>
  <path d="M484 147.7h14"/>
  <rect x="484.3" y="139.8" width="2.3" height="5.7"/>
  <rect x="488.2" y="136.8" width="3.3" height="8.9"/>
  <path d="M495.7 139v6M493.7 143l2 2 2-2"/>
  <path d="M513.3 142.6h13.5"/>
  <rect x="515.3" y="139.5" width="3" height="6.3" fill="#E6E6E6"/>
  <rect x="519.9" y="137.2" width="4.6" height="10" fill="#E6E6E6"/>
  <path d="M548.3 135.8v14.2"/>
  <rect x="545.3" y="138.3" width="6.2" height="3.1" fill="#E6E6E6"/>
  <rect x="543" y="143.9" width="10.9" height="3.7" fill="#E6E6E6"/>
  <rect x="570.1" y="139.8" width="3.2" height="6.6"/>
  <rect x="574.8" y="138.3" width="4.7" height="10.2"/>
  <rect x="581.3" y="140.7" width="3.2" height="4.7"/>
  <rect x="603.1" y="135.5" width="6.2" height="3.3"/>
  <rect x="601.8" y="140.7" width="11.2" height="3.7"/>
  <rect x="603.1" y="146.1" width="8.1" height="3.4"/>
  <circle cx="629.8" cy="140.7" r="5" fill="#EDEDED"/>
  <circle cx="634.1" cy="144.4" r="5" fill="none"/>
</g>
<!-- crop -->
<path d="M670 139.5v9.5M675.5 136v9.5M669 140.5h10M666 144.8h10.5" fill="none" stroke="#9C9C9C" stroke-width="2"/>
<!-- rotate -->
<path d="M700.5 147.5l7.5-6.5v6.5z" fill="#fff" stroke="#B8B8B8" stroke-width="1"/>
<path d="M709.3 137.2l6.9 10.4h-6.9z" fill="#A0A0A0"/>
<path d="M702 141.5a3.5 3.5 0 0 1 4 -3.2" fill="none" stroke="#A0A0A0" stroke-width="1.1"/>
<path d="M705.5 136.3l2.2 2-2.2 1.8z" fill="#A0A0A0"/>
<!-- group -->
<rect x="744" y="138" width="8.5" height="8.5" fill="#D8D8D8"/>
<path d="M741.5 139.5v-4h4M755.5 145.5v4h-4" fill="none" stroke="#A0A0A0" stroke-width="1"/>
<!-- bring forward -->
<rect x="773" y="138.5" width="8.5" height="8" fill="#D8D8D8"/>
<rect x="770.4" y="135.9" width="5" height="5" fill="#F3F3F3" stroke="#A0A0A0" stroke-width="1"/>
<rect x="779.6" y="144.6" width="5" height="5" fill="#F3F3F3" stroke="#A0A0A0" stroke-width="1"/>
<!-- A -->
<text x="801.8" y="147.6" font-size="14.5" font-weight="bold" fill="#A0A0A0" font-family="Liberation Sans">A</text>
<!-- line spacing -->
<g fill="none" stroke="#A6A6A6" stroke-width="1">
  <path d="M837.5 135.5v15M835.3 137.8l2.2-2.3 2.2 2.3M835.3 148.2l2.2 2.3 2.2-2.3"/>
  <path d="M841.4 138.5h7.6M841.4 141.5h7.6M841.4 144.5h7.6M841.4 147.5h7.6"/>
</g>
<!-- smartart -->
<path d="M871 135h9.5l5.5 5.8h-9.5v4h-5.5z" fill="#BDBDBD"/>
<rect x="876.5" y="141.5" width="10.3" height="9.5" fill="#F3F3F3" stroke="#A6A6A6" stroke-width="1"/>
<path d="M879 144.5h0.7M879 148h0.7M881 144.5h4M881 148h4" stroke="#A6A6A6" stroke-width="0.8"/>

<!-- doc tab row -->
<g fill="none" stroke="#6E6E6E" stroke-width="1">
  <path d="M-1 165.5h7.5l4 4v11h-11.5"/>
  <path d="M6.5 165.5v4h4"/>
</g>
<path d="M6 173h3M6 175.5h3M6 178h3" stroke="#C0C0C0" stroke-width="1"/>
<path d="M-1 171a4.5 4.5 0 0 1 0 9" fill="none" stroke="#6E6E6E" stroke-width="1"/>
<path d="M-1 175.5h3" stroke="#2E6EB5" stroke-width="1"/>
<path d="M0.5 173.5l1 2" stroke="#E05A3A" stroke-width="1"/>
<!-- ppt icon -->
<rect x="29" y="167" width="9" height="12" fill="#D24726"/>
<path d="M31 169.5h5M31 176.5h5" stroke="#fff" stroke-width="1"/>
<path d="M22 166.5l9-1.6v16l-9-1.6z" fill="#D24726"/>
<path d="M24.5 177.5v-8.5h2.8a2.3 2.3 0 0 1 0 4.6h-2.8" fill="none" stroke="#fff" stroke-width="1.4"/>
<path d="M31 172h3M31 174h4" stroke="#fff" stroke-width="1"/>
<!-- close, menu, plus -->
<path d="M164.2 168.8l9 9M173.2 168.8l-9 9" stroke="#6A6A6A" stroke-width="1"/>
<g fill="#555"><rect x="186.2" y="168.7" width="1.7" height="1.7"/><rect x="186.2" y="172.7" width="1.7" height="1.7"/><rect x="186.2" y="176.7" width="1.7" height="1.7"/></g>
<path d="M208.8 167.3v10.5M203 172.5h11.8" stroke="#555" stroke-width="1.6"/>
<!-- magic wand -->
<path d="M800.5 175l5.2 5" stroke="#555" stroke-width="1.5"/>
<polygon points="795.40,166.01 798.08,169.20 802.20,168.62 800.00,172.16 801.82,175.90 797.78,174.90 794.78,177.79 794.48,173.63 790.81,171.68 794.67,170.11" fill="#BCCBEF" stroke="#666" stroke-width="0.9"/>
<circle cx="796.8" cy="171.8" r="1.4" fill="#fff"/>
<g stroke="#777" stroke-width="0.8"><path d="M796 164.5v-1.3M803.5 167.5l1-1M790 171h-1.2M793.5 177.5l-0.8 0.8"/></g>
<!-- gear -->
<g fill="#EB8A4E">
  <circle cx="826" cy="172.4" r="5.4"/><circle cx="831.60" cy="172.40" r="1.9"/><circle cx="828.80" cy="177.25" r="1.9"/><circle cx="823.20" cy="177.25" r="1.9"/><circle cx="820.40" cy="172.40" r="1.9"/><circle cx="823.20" cy="167.55" r="1.9"/><circle cx="828.80" cy="167.55" r="1.9"/>
</g>
<circle cx="826" cy="172.4" r="2.3" fill="#F3F3F3"/>
<!-- window -->
<rect x="851" y="166.5" width="9.5" height="7" fill="#E2E2E2" stroke="#777" stroke-width="1"/>
<rect x="847.5" y="169.5" width="10" height="8" fill="#fff" stroke="#555" stroke-width="1"/>
<rect x="847.5" y="169.5" width="10" height="1.5" fill="#555"/>
</svg>
<svg width="911" height="678" style="left:0;top:0" viewBox="0 0 911 678">
<path d="M82.5 196.5l3.7-3.5 3.7 3.5z" fill="#606060"/>
<path d="M468 485.5h2.5l1 1 1-1h2.5M471.5 486.5v13M468 500.5h2.5l1-1 1 1h2.5" fill="none" stroke="#000" stroke-width="1"/>
</svg>
</body>
</html>
